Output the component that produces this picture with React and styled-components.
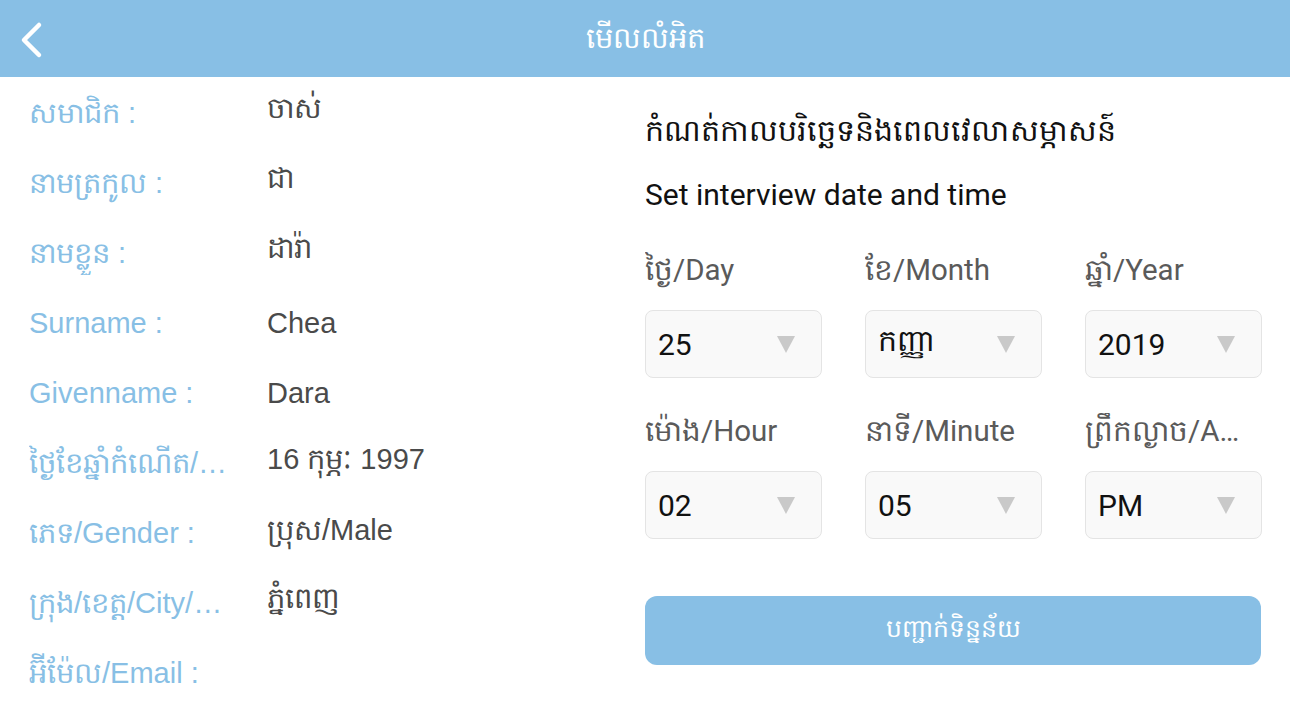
import React from 'react';
import styled, { createGlobalStyle } from 'styled-components';

const GlobalStyle = createGlobalStyle`
    html, body {
        margin: 0;
        padding: 0;
        background: #ffffff;
    }
    body {
        font-family: "Liberation Sans", "Noto Sans", Arial, sans-serif;
    }
`;

const Page = styled.div`
    width: 1290px;
    height: 726px;
    overflow: hidden;
    display: flex;
    flex-direction: column;
    background: #ffffff;
`;

const Header = styled.div`
    height: 77px;
    flex-shrink: 0;
    background-color: #88bfe5;
    display: flex;
    align-items: center;
    justify-content: center;
    position: relative;
`;

const BackButton = styled.button`
    position: absolute;
    left: 13px;
    top: 20px;
    width: 36px;
    height: 40px;
    border: none;
    padding: 0;
    background: transparent;
    display: flex;
    align-items: center;
    justify-content: center;
`;

const HeaderTitle = styled.div`
    color: #ffffff;
    font-size: 29px;
    line-height: 1;
`;

const Body = styled.div`
    flex: 1;
    display: flex;
`;

const InfoList = styled.div`
    width: 645px;
    padding: 1px 0 0 29px;
    box-sizing: border-box;
    display: flex;
    flex-direction: column;
`;

const InfoRow = styled.div`
    height: 70px;
    display: flex;
    align-items: center;
`;

const InfoLabel = styled.div`
    width: 208px;
    flex-shrink: 0;
    color: #88bfe5;
    font-size: 29px;
    line-height: 44px;
    white-space: nowrap;
    overflow: hidden;
    text-overflow: ellipsis;
`;

const InfoValue = styled.div`
    margin-left: 30px;
    color: #4a4a4a;
    font-size: 29px;
    line-height: 44px;
    white-space: nowrap;
    margin-bottom: ${({ $raise }) => $raise || 0}px;
`;

const Schedule = styled.div`
    width: 616px;
    padding-top: 34px;
    display: flex;
    flex-direction: column;
    font-family: Roboto, "Noto Sans", sans-serif;
`;

const KhmerHeading = styled.div`
    font-size: 30px;
    color: #111111;
    line-height: 40px;
`;

const EnglishHeading = styled.div`
    font-size: 30px;
    color: #111111;
    line-height: 40px;
    margin-top: 24px;
`;

const PickerGrid = styled.div`
    display: grid;
    grid-template-columns: repeat(3, 177px);
    column-gap: 43px;
    margin-top: 37px;
`;

const Field = styled.div`
    display: flex;
    flex-direction: column;
    margin-bottom: ${({ $last }) => ($last ? 0 : 35)}px;
`;

const FieldLabel = styled.div`
    font-size: 29.5px;
    color: #5a5a5a;
    line-height: 36px;
    height: 36px;
    white-space: nowrap;
    overflow: hidden;
    text-overflow: ellipsis;
`;

const Select = styled.div`
    margin-top: 22px;
    height: 68px;
    box-sizing: border-box;
    border: 1px solid #e4e4e4;
    border-radius: 8px;
    background: #f9f9f9;
    display: flex;
    align-items: center;
    justify-content: space-between;
    padding: 0 26px 0 12px;
`;

const SelectValue = styled.span`
    font-size: 30px;
    color: #111111;
`;

const Arrow = styled.span`
    width: 0;
    height: 0;
    border-left: 9px solid transparent;
    border-right: 9px solid transparent;
    border-top: 17px solid #c9c9c9;
`;

const ConfirmButton = styled.button`
    margin-top: 57px;
    height: 69px;
    width: 100%;
    border: none;
    border-radius: 12px;
    background-color: #88bfe5;
    color: #ffffff;
    font-size: 25px;
    font-family: Roboto, "Noto Sans", sans-serif;
`;

const info = [
    { label: 'សមាជិក :', value: 'ចាស់', raise: 10 },
    { label: 'នាមត្រកូល :', value: 'ជា', raise: 10 },
    { label: 'នាមខ្លួន :', value: 'ដារ៉ា', raise: 10 },
    { label: 'Surname :', value: 'Chea' },
    { label: 'Givenname :', value: 'Dara' },
    { label: 'ថ្ងៃខែឆ្នាំកំណើត/Date of birth :', value: '16 កុម្ភៈ 1997', raise: 8 },
    { label: 'ភេទ/Gender :', value: 'ប្រុស/Male', raise: 6 },
    { label: 'ក្រុង/ខេត្ត/City/Province :', value: 'ភ្នំពេញ', raise: 10 },
    { label: 'អ៊ីម៉ែល/Email :', value: '' },
];

const fields = [
    { label: 'ថ្ងៃ/Day', value: '25' },
    { label: 'ខែ/Month', value: 'កញ្ញា' },
    { label: 'ឆ្នាំ/Year', value: '2019' },
    { label: 'ម៉ោង/Hour', value: '02' },
    { label: 'នាទី/Minute', value: '05' },
    { label: 'ព្រឹកល្ងាច/AM PM', value: 'PM' },
];

const App = () => {
    return (
        <Page>
            <GlobalStyle />
            <Header>
                <BackButton aria-label="back">
                    <svg width="26" height="38" viewBox="0 0 26 38">
                        <path d="M21 4 L6 19 L21 34" fill="none" stroke="#fff" strokeWidth="4.5" strokeLinecap="round" strokeLinejoin="round" />
                    </svg>
                </BackButton>
                <HeaderTitle>មើលលំអិត</HeaderTitle>
            </Header>
            <Body>
                <InfoList>
                    {info.map((row) => (
                        <InfoRow key={row.label}>
                            <InfoLabel>{row.label}</InfoLabel>
                            <InfoValue $raise={row.raise}>{row.value}</InfoValue>
                        </InfoRow>
                    ))}
                </InfoList>
                <Schedule>
                    <KhmerHeading>កំណត់កាលបរិច្ឆេទនិងពេលវេលាសម្ភាសន៍</KhmerHeading>
                    <EnglishHeading>Set interview date and time</EnglishHeading>
                    <PickerGrid>
                        {fields.map((f, i) => (
                            <Field key={f.label} $last={i > 2}>
                                <FieldLabel>{f.label}</FieldLabel>
                                <Select>
                                    <SelectValue>{f.value}</SelectValue>
                                    <Arrow />
                                </Select>
                            </Field>
                        ))}
                    </PickerGrid>
                    <ConfirmButton>បញ្ជាក់ទិន្នន័យ</ConfirmButton>
                </Schedule>
            </Body>
        </Page>
    );
};

export default App;
